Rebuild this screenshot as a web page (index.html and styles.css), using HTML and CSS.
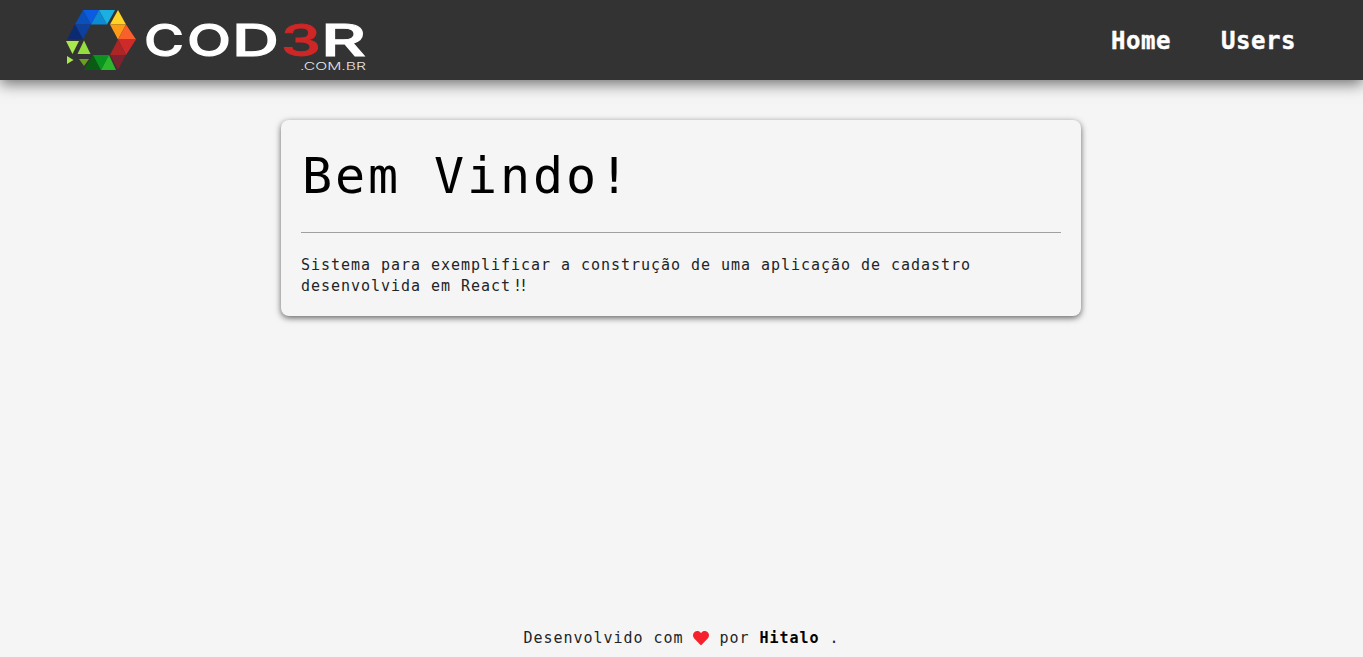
FILE: index.html
```html
<!DOCTYPE html>
<html lang="pt-BR">
<head>
<meta charset="utf-8">
<title>Cod3r</title>
<link rel="stylesheet" href="styles.css">
</head>
<body>
<header class="topbar">
  <a class="logo" href="#" aria-label="COD3R.com.br">
    <svg class="logo-svg" viewBox="60 0 320 80" width="320" height="80">
      <polygon fill="#0a50bd" points="75,24.5 83,10 91,24.5"/>
      <polygon fill="#0b5ce0" points="83,10 99,10 91,24.5"/>
      <polygon fill="#0c8ad6" points="99,10 91,24.5 107,24.5"/>
      <polygon fill="#1bb0e2" points="99,10 115,10 107,24.5"/>
      <polygon fill="#0d3f9c" points="75,24.5 91,24.5 83,39.5"/>
      <polygon fill="#0b2a72" points="75,24.5 67,39.5 83,39.5"/>
      <polygon fill="#ffd426" points="118,10 110,24.5 126,24.5"/>
      <polygon fill="#ff9a17" points="110,24.5 126,24.5 118,39.5"/>
      <polygon fill="#f8602c" points="126,24.5 118,39.5 136,39.5"/>
      <polygon fill="#cf2a2a" points="118,39.5 136,39.5 126,55"/>
      <polygon fill="#ae2526" points="118,39.5 126,55 110,55"/>
      <polygon fill="#7c2230" points="110,55 126,55 118,70"/>
      <polygon fill="#0a5c14" points="84,70 93,55 102,70"/>
      <polygon fill="#0a9320" points="93,55 109,55 101,70"/>
      <polygon fill="#2db62c" points="101,70 109,55 116,70"/>
      <polygon fill="#a8e84c" points="66,41 79,41 72.5,54"/>
      <polygon fill="#94dc40" points="84,40.5 77.5,54 90.5,54"/>
      <polygon fill="#a8e84c" points="67,56 67,64 73.500,60"/>
      <polygon fill="#6c9e20" points="79,59 89,59 84,66"/>
      <g class="word">
        <text x="144" y="56" textLength="40" lengthAdjust="spacingAndGlyphs">C</text>
        <text x="187" y="56" textLength="44" lengthAdjust="spacingAndGlyphs">O</text>
        <text x="232" y="56" textLength="47" lengthAdjust="spacingAndGlyphs">D</text>
        <text class="word-red" x="281" y="56" textLength="40" lengthAdjust="spacingAndGlyphs">3</text>
        <text x="321" y="56" textLength="45" lengthAdjust="spacingAndGlyphs">R</text>
      </g>
      <text class="tld" x="300" y="70" textLength="66" lengthAdjust="spacingAndGlyphs">.COM.BR</text>
    </svg>
  </a>
  <nav class="nav">
    <a class="nav-link" href="#">Home</a>
    <a class="nav-link" href="#">Users</a>
  </nav>
</header>
<main class="content">
  <section class="card">
    <h1 class="title">Bem Vindo!</h1>
    <hr class="rule">
    <p class="lead">Sistema para exemplificar a construção de uma aplicação de cadastro desenvolvida em React<span class="bangs">!!</span></p>
  </section>
</main>
<footer class="footer">
  <span>Desenvolvido com</span>
  <svg class="heart" viewBox="0 0 512 512" width="16" height="16" aria-hidden="true"><path d="M462.300 62.600C407.500 15.900 326 24.300 275.700 76.200L256 96.500l-19.700-20.300C186.100 24.300 104.500 15.900 49.700 62.600c-62.800 53.600-66.100 149.800-9.900 207.900l193.500 199.800c12.500 12.900 32.800 12.900 45.300 0l193.500-199.800c56.300-58.100 53-154.300-9.800-207.900z"/></svg>
  <span>por <strong>Hitalo</strong> .</span>
</footer>
</body>
</html>
```
FILE: styles.css
```css
* { box-sizing: border-box; }

html, body { height: 100%; }

body {
  margin: 0;
  min-height: 100vh;
  display: flex;
  flex-direction: column;
  overflow: hidden;
  background: #f5f5f5;
  color: #212529;
  font-family: "DejaVu Sans Mono", monospace;
  font-size: 15px;
  letter-spacing: 0.97px;
  line-height: 21px;
}

.topbar {
  flex: none;
  height: 80px;
  display: flex;
  align-items: center;
  justify-content: space-between;
  padding: 0 42px 0 60px;
  background: #333;
  box-shadow: 0 4px 14px rgba(0, 0, 0, 0.55);
}

.logo { display: block; height: 80px; }
.logo-svg { display: block; }

.word text {
  font-family: "Inter", sans-serif;
  font-size: 44px;
  font-weight: 500;
  fill: #fff;
  stroke: #fff;
  stroke-width: 1px;
  letter-spacing: 0;
}
.word .word-red { fill: #cf2626; stroke: #cf2626; }

.tld {
  font-family: "Inter", sans-serif;
  font-size: 10px;
  font-weight: 300;
  fill: #e6e6e6;
  letter-spacing: 0;
}

.nav { display: flex; margin-top: 2px; }

.nav-link {
  padding: 0 25px;
  color: #fff;
  text-decoration: none;
  font-family: "DejaVu Sans Mono", monospace;
  font-size: 24px;
  font-weight: 700;
  letter-spacing: 0.55px;
  line-height: 78px;
  -webkit-text-stroke: 0.4px #fff;
}

.content {
  flex: 1;
  padding: 40px 1px 0 0;
}

.card {
  width: 800px;
  margin: 0 auto;
  padding: 20px 20px 19px;
  border-radius: 8px;
  background: #f5f5f5;
  box-shadow: 0 2px 6px rgba(0, 0, 0, 0.6);
}

.title {
  margin: 0;
  height: 72px;
  padding-left: 1px;
  color: #000;
  font-size: 50px;
  font-weight: 400;
  letter-spacing: 2.9px;
  line-height: 72px;
}

.rule {
  height: 1px;
  margin: 20px 0 22px;
  border: 0;
  background: #a0a0a0;
}

.lead { margin: 0; }

.bangs {
  margin-left: 2px;
  letter-spacing: -3px;
}

.footer {
  flex: none;
  height: 40px;
  padding-top: 2px;
  display: flex;
  align-items: center;
  justify-content: center;
  gap: 10px;
}

.heart { display: block; fill: #f5222d; }
strong { color: #000; font-weight: 700; }
```
